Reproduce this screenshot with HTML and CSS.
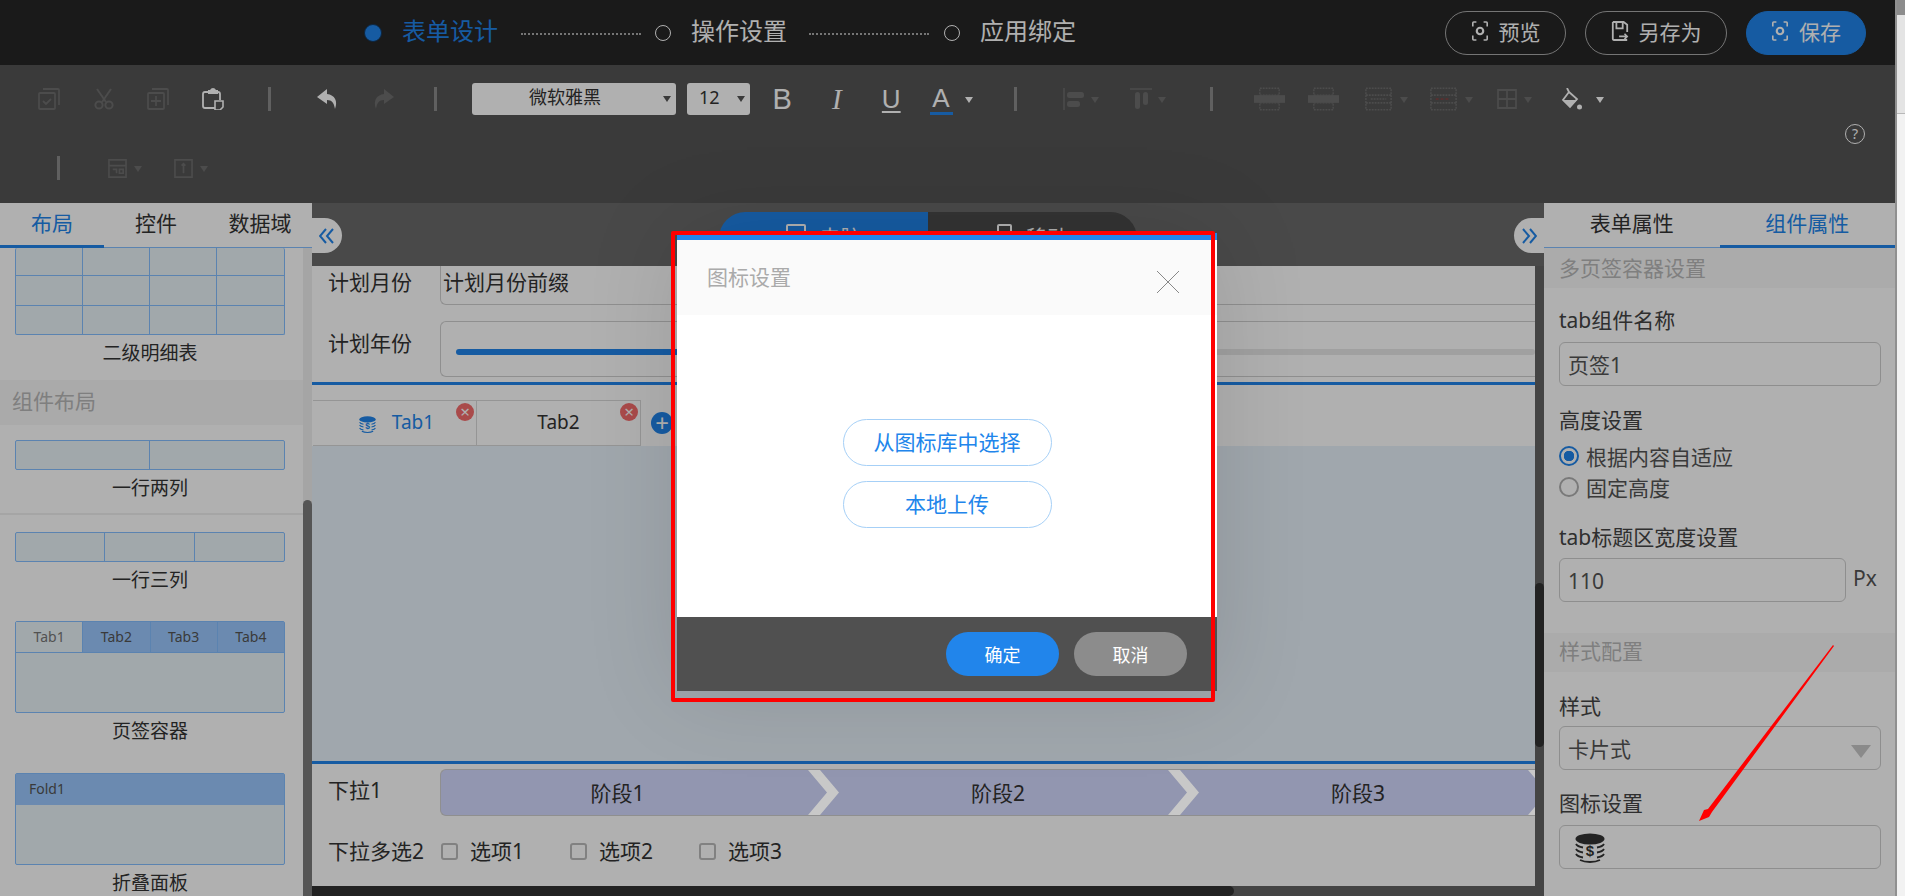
FILE: index.html
```html
<!DOCTYPE html>
<html lang="zh-CN">
<head>
  <meta charset="UTF-8" />
  <title>表单设计</title>
  <link rel="stylesheet" href="styles.css">
</head>
<body>

  <svg class="defs" width="0" height="0">
    <symbol id="scan" viewBox="0 0 20 24">
      <path d="M2 7V3q0-1 1-1h3M14 2h3q1 0 1 1v4M2 17v4q0 1 1 1h3M14 22h3q1 0 1-1v-4" fill="none" stroke="currentColor" stroke-width="1.800"/>
      <circle cx="10" cy="12" r="3.600" fill="none" stroke="currentColor" stroke-width="2.400"/>
    </symbol>
  </svg>

  <div class="page">
    <div class="app">

      <header class="topbar">
        <div class="steps">
          <span class="step-dot"></span>
          <span class="step-name step-name-on">表单设计</span>
          <span class="step-line step-line-a"></span>
          <span class="step-ring"></span>
          <span class="step-name">操作设置</span>
          <span class="step-line step-line-b"></span>
          <span class="step-ring"></span>
          <span class="step-name">应用绑定</span>
        </div>
        <div class="top-actions">
          <button class="top-btn top-btn-preview"><svg class="top-ic"><use href="#scan"/></svg>预览</button>
          <button class="top-btn top-btn-saveas">
            <svg class="top-ic" viewBox="0 0 20 24"><path d="M2 2h12l4 3v8M18 22H3q-1 0-1-1V2M6 2v7h7V2" fill="none" stroke="currentColor" stroke-width="2"/><path d="M9 18h9M15 15l3 3-3 3" fill="none" stroke="currentColor" stroke-width="1.800"/></svg>
            另存为
          </button>
          <button class="top-btn top-btn-save"><svg class="top-ic"><use href="#scan"/></svg>保存</button>
        </div>
      </header>

      <section class="toolbar">
        <div class="tb-row">
          <span class="tool"><svg class="ic off" viewBox="0 0 22 22"><path d="M5 1h15q1 0 1 1v15M2 5h14q1 0 1 1v14q0 1-1 1H2q-1 0-1-1V6q0-1 1-1zM5 13l3 3 5-5" fill="none" stroke="currentColor" stroke-width="1.800"/></svg></span>
          <span class="tool"><svg class="ic off" viewBox="0 0 22 22"><path d="M4 1l9 13M18 1L9 14" fill="none" stroke="currentColor" stroke-width="2"/><circle cx="6" cy="17" r="3.600" fill="none" stroke="currentColor" stroke-width="2"/><circle cx="16" cy="17" r="3.600" fill="none" stroke="currentColor" stroke-width="2"/></svg></span>
          <span class="tool"><svg class="ic off" viewBox="0 0 22 22"><path d="M5 1h15q1 0 1 1v15M2 5h14q1 0 1 1v14q0 1-1 1H2q-1 0-1-1V6q0-1 1-1zM9 8v10M4 13h10" fill="none" stroke="currentColor" stroke-width="1.800"/></svg></span>
          <span class="tool"><svg class="ic" viewBox="0 0 22 22"><path d="M14 20H3q-2 0-2-2V6q0-2 2-2h13q2 0 2 2v6" fill="none" stroke="currentColor" stroke-width="1.800"/><path d="M6 2h2q1-2 3-2t3 2h2v4H6z" fill="currentColor"/><path d="M13 13h8v6l-3 3h-5z" fill="#545454" stroke="currentColor" stroke-width="1.600"/></svg></span>
          <span class="sep sep-history"></span>
          <span class="tool tool-after-sep"><svg class="ic" viewBox="0 0 22 22"><path d="M10 1L0 9l10 7v-4c5 0 7 3 8 9 3-8 0-14-8-15z" fill="currentColor"/></svg></span>
          <span class="tool"><svg class="ic off" viewBox="0 0 22 22"><path d="M12 1l10 8-10 7v-4C7 12 5 15 4 21 1 13 4 7 12 6z" fill="currentColor"/></svg></span>
          <span class="sep sep-font"></span>
          <span class="pick pick-font">微软雅黑<i class="pick-caret"></i></span>
          <span class="pick pick-size">12<i class="pick-caret"></i></span>
          <span class="tool tool-glyph tool-bold">B</span>
          <span class="tool tool-glyph tool-italic">I</span>
          <span class="tool tool-glyph tool-under">U</span>
          <span class="tool tool-color"><span class="color-a">A</span><i class="caret"></i></span>
          <span class="sep sep-align"></span>
          <span class="tool tool-align"><svg class="ic off" viewBox="0 0 22 22"><path d="M1 0v22" stroke="currentColor" stroke-width="1.500"/><rect x="4" y="4" width="17" height="6" rx="2.500" fill="currentColor"/><rect x="4" y="13" width="13" height="6" rx="2.500" fill="currentColor"/></svg><i class="caret caret-off"></i></span>
          <span class="tool tool-valign"><svg class="ic off" viewBox="0 0 22 22"><path d="M0 1h22" stroke="currentColor" stroke-width="1.500"/><rect x="5" y="4" width="5" height="17" rx="2.500" fill="currentColor"/><rect x="13" y="4" width="5" height="13" rx="2.500" fill="currentColor"/></svg><i class="caret caret-off"></i></span>
          <span class="sep"></span>
          <span class="tool tool-merge"><svg class="ic ic-wide off" viewBox="0 0 32 24"><path d="M6 1h20v22H6zM6 8h20M6 16h20" fill="none" stroke="currentColor" stroke-width="1.500" stroke-dasharray="2 1"/><rect x="0" y="8" width="32" height="8" fill="currentColor"/></svg></span>
          <span class="tool tool-merge2"><svg class="ic ic-wide off" viewBox="0 0 32 24"><path d="M6 1h20v22H6zM6 8h20M6 16h20" fill="none" stroke="currentColor" stroke-width="1.500" stroke-dasharray="2 1"/><rect x="0" y="8" width="32" height="8" fill="currentColor"/></svg></span>
          <span class="tool tool-cells"><svg class="ic ic-wide off" viewBox="0 0 32 24"><path d="M3 1h26v7H3zM3 16h26v7H3zM3 8v8M29 8v8M8 12h16" fill="none" stroke="currentColor" stroke-width="1.600" stroke-dasharray="2 1"/></svg><i class="caret caret-off"></i></span>
          <span class="tool tool-cells2"><svg class="ic ic-wide off" viewBox="0 0 32 24"><path d="M3 1h26v7H3zM3 16h26v7H3zM3 8v8M29 8v8" fill="none" stroke="currentColor" stroke-width="1.600" stroke-dasharray="2 1"/><path d="M8 12h14" stroke="#7c4646" stroke-width="2" stroke-dasharray="3 2"/></svg><i class="caret caret-off"></i></span>
          <span class="tool tool-grid"><svg class="ic off" viewBox="0 0 22 22"><path d="M2 2h18v18H2zM11 2v18M2 11h18" fill="none" stroke="currentColor" stroke-width="1.800"/></svg><i class="caret caret-off"></i></span>
          <span class="tool tool-fill"><svg class="ic" viewBox="0 0 22 22"><path d="M7 0l2 4-6 8 7 7 7-8-8-7" fill="none" stroke="currentColor" stroke-width="1.800"/><path d="M3 12h14l-7 7z" fill="currentColor"/><circle cx="19.500" cy="19" r="2.500" fill="currentColor"/></svg><i class="caret"></i></span>
        </div>
        <div class="tb-help"><span class="help-mark">?</span></div>
        <div class="tb-row tb-row-two">
          <span class="sep"></span>
          <span class="tool tool-view"><svg class="ic ic-small off" viewBox="0 0 22 20"><path d="M2 1h18v18H2zM2 7h18M6 11h4v4M13 11h4v4h-4z" fill="none" stroke="currentColor" stroke-width="1.800"/></svg><i class="caret caret-off"></i></span>
          <span class="tool tool-view"><svg class="ic ic-small off" viewBox="0 0 22 20"><path d="M2 1h18v18H2zM11 5v10M9 7l2-2 2 2" fill="none" stroke="currentColor" stroke-width="1.800"/></svg><i class="caret caret-off"></i></span>
        </div>
      </section>

      <main class="workspace">

        <aside class="left-panel">
          <nav class="tabs">
            <span class="tab tab-on">布局</span>
            <span class="tab">控件</span>
            <span class="tab">数据域</span>
          </nav>
          <div class="left-body">
            <div class="widget-list">
              <div class="widget widget-table">
                <div class="thumb thumb-four thumb-open">
                  <i class="row-a"></i><i class="row-a"></i><i class="row-a"></i><i class="row-a"></i>
                  <i class="row-b"></i><i class="row-b"></i><i class="row-b"></i><i class="row-b"></i>
                  <i class="row-c"></i><i class="row-c"></i><i class="row-c"></i><i class="row-c"></i>
                </div>
                <p class="widget-name">二级明细表</p>
              </div>
              <h4 class="widget-group">组件布局</h4>
              <div class="widget widget-line">
                <div class="thumb thumb-two"><i></i><i></i></div>
                <p class="widget-name">一行两列</p>
              </div>
              <div class="widget widget-three">
                <div class="thumb thumb-three"><i></i><i></i><i></i></div>
                <p class="widget-name">一行三列</p>
              </div>
              <div class="widget widget-tabs">
                <div class="thumb-tabs">
                  <div class="thumb-head">
                    <span class="thumb-tab thumb-tab-on">Tab1</span>
                    <span class="thumb-tab">Tab2</span>
                    <span class="thumb-tab">Tab3</span>
                    <span class="thumb-tab">Tab4</span>
                  </div>
                </div>
                <p class="widget-name">页签容器</p>
              </div>
              <div class="widget widget-fold">
                <div class="thumb-tabs">
                  <div class="thumb-fold">Fold1</div>
                </div>
                <p class="widget-name">折叠面板</p>
              </div>
            </div>
            <div class="scrollbar"><span class="scroll-thumb"></span></div>
          </div>
        </aside>

        <section class="center">
          <div class="strip">
            <span class="collapse collapse-left"><svg width="16" height="16" viewBox="0 0 16 16"><path d="M7 1L1 8l6 7M14 1L8 8l6 7" fill="none" stroke="currentColor" stroke-width="2"/></svg></span>
            <div class="device-switch">
              <span class="device device-on"><i class="device-ic"></i>电脑</span>
              <span class="device"><i class="device-ic device-ic-small"></i>移动</span>
            </div>
            <span class="collapse collapse-right"><svg width="16" height="16" viewBox="0 0 16 16"><path d="M2 1l6 7-6 7M9 1l6 7-6 7" fill="none" stroke="currentColor" stroke-width="2"/></svg></span>
          </div>
          <div class="canvas-wrap">
            <div class="canvas">
              <div class="form-row form-row-month">
                <label class="form-label">计划月份</label>
                <div class="form-box form-box-cut">计划月份前缀</div>
              </div>
              <div class="form-row form-row-year">
                <label class="form-label">计划年份</label>
                <div class="form-box form-box-slider"><span class="slider"></span></div>
              </div>
              <div class="blue-line blue-line-top"></div>
              <div class="design-tabs">
                <span class="design-tab design-tab-on">
                  <svg class="coin-small" viewBox="0 0 30 30">
                    <ellipse cx="15" cy="6" rx="14.500" ry="5.500" fill="currentColor"/>
                    <path d="M1 11c1 2 4 3 7 3.500M1 16c1 2 4 3 7 3.500M1 21c1 2 4 3 7 3.500M5 27c3 1.500 7 2 10 2s7-.5 10-2M29 11c-1 2-4 3-7 3.500M29 16c-1 2-4 3-7 3.500M29 21c-1 2-4 3-7 3.500" fill="none" stroke="currentColor" stroke-width="1.800"/>
                    <text class="coin-sign" x="15" y="23">$</text>
                  </svg>
                  Tab1<i class="tab-close">×</i>
                </span>
                <span class="design-tab">Tab2<i class="tab-close">×</i></span>
                <span class="tab-add">+</span>
              </div>
              <div class="design-pane"></div>
              <div class="blue-line"></div>
              <div class="form-row form-row-stage">
                <label class="form-label">下拉1</label>
                <div class="stages">
                  <span class="stage stage-first">阶段1<i class="chevron"></i></span>
                  <span class="stage">阶段2<i class="chevron"></i></span>
                  <span class="stage">阶段3<i class="chevron"></i></span>
                </div>
              </div>
              <div class="form-row form-row-check">
                <label class="form-label">下拉多选2</label>
                <span class="check"><i class="check-box"></i>选项1</span>
                <span class="check"><i class="check-box"></i>选项2</span>
                <span class="check"><i class="check-box"></i>选项3</span>
              </div>
              <div class="hbar"><span class="hbar-thumb"></span></div>
            </div>
            <div class="vbar"><span class="vbar-thumb"></span></div>
          </div>
        </section>

        <aside class="right-panel">
          <nav class="tabs">
            <span class="tab">表单属性</span>
            <span class="tab tab-on">组件属性</span>
          </nav>
          <h4 class="prop-group">多页签容器设置</h4>
          <div class="props">
            <p class="prop-label">tab组件名称</p>
            <div class="prop-input prop-gap-name">页签1</div>
            <p class="prop-label prop-label-height">高度设置</p>
            <p class="radio radio-on"><i class="radio-mark"></i>根据内容自适应</p>
            <p class="radio"><i class="radio-mark"></i>固定高度</p>
            <p class="prop-label prop-label-width">tab标题区宽度设置</p>
            <div class="prop-unit">
              <div class="prop-input prop-input-short">110</div>
              <span>Px</span>
            </div>
          </div>
          <h4 class="prop-group prop-group-style">样式配置</h4>
          <div class="props">
            <p class="prop-label prop-label-style">样式</p>
            <div class="prop-input prop-select">卡片式<i class="select-caret"></i></div>
            <p class="prop-label prop-label-icon">图标设置</p>
            <div class="prop-input prop-gap-name">
              <svg class="coin-big" viewBox="0 0 30 30">
                <ellipse cx="15" cy="6" rx="14.500" ry="5.500" fill="currentColor"/>
                <path d="M1 11c1 2 4 3 7 3.500M1 16c1 2 4 3 7 3.500M1 21c1 2 4 3 7 3.500M5 27c3 1.500 7 2 10 2s7-.5 10-2M29 11c-1 2-4 3-7 3.500M29 16c-1 2-4 3-7 3.500M29 21c-1 2-4 3-7 3.500" fill="none" stroke="currentColor" stroke-width="1.800"/>
                <text class="coin-sign" x="15" y="23">$</text>
              </svg>
            </div>
          </div>
        </aside>
      </main>

      <div class="mask"></div>

      <div class="dialog">
        <div class="dialog-head">
          <span>图标设置</span>
          <svg class="dialog-close" viewBox="0 0 22 22"><path d="M0 0l22 22M22 0L0 22" stroke="currentColor" stroke-width="1"/></svg>
        </div>
        <div class="dialog-body">
          <button class="ghost-btn">从图标库中选择</button>
          <button class="ghost-btn">本地上传</button>
        </div>
        <div class="dialog-foot">
          <button class="foot-btn foot-btn-ok">确定</button>
          <button class="foot-btn foot-btn-cancel">取消</button>
        </div>
      </div>

      <div class="red-box"></div>
      <svg class="red-arrow" viewBox="0 0 150 190"><polygon points="143,5 144,6 22,172 19,177 9,181 14,170 18,169" fill="#f00"/></svg>
    </div>

    <div class="page-edge"></div>
  </div>

</body>
</html>
```

FILE: styles.css
```css
* {
  box-sizing: border-box;
  margin: 0;
  padding: 0;
}

html, body {
  height: 100%;
  overflow: hidden;
  font-family: "Noto Sans", "Noto Sans CJK SC", sans-serif;
  color: #333;
}

i {
  font-style: normal;
}

button {
  font-family: inherit;
  cursor: pointer;
}

.defs {
  position: absolute;
}

.page {
  display: flex;
  height: 896px;
}

.app {
  position: relative;
  width: 1895px;
  display: flex;
  flex-direction: column;
}

.page-edge {
  flex: 1;
  background: linear-gradient(#8c8c8c 15px, #e4e4e4 15px, #e4e4e4 113px, #b8b8b8 113px, #b8b8b8 114px, #f2f2f2 114px);
  border-left: 2px solid #909090;
}

/* Top bar */
.topbar {
  height: 65px;
  background: #262626;
  display: flex;
  align-items: center;
  padding-left: 364px;
  padding-right: 29px;
  flex: none;
}

.steps {
  display: flex;
  align-items: center;
}

.step-dot {
  width: 18px;
  height: 18px;
  border-radius: 50%;
  background: #2185eb;
  border: 1px solid #14375c;
  margin-right: 20px;
}

.step-ring {
  width: 16px;
  height: 16px;
  border-radius: 50%;
  border: 1.5px solid #fff;
  margin-right: 20px;
}

.step-name {
  font-size: 24px;
  line-height: 34px;
  padding-bottom: 3px;
  color: #fff;
}

.step-name-on {
  color: #2185eb;
}

.step-line {
  width: 120px;
  border-top: 2px dotted #aaa;
}

.step-line-a {
  margin: 2px 14px 0 23px;
}

.step-line-b {
  margin: 2px 15px 0 22px;
}

.top-actions {
  margin-left: auto;
  display: flex;
  gap: 19px;
}

.top-btn {
  height: 44px;
  border-radius: 22px;
  border: 1px solid #aaa;
  background: transparent;
  color: #fff;
  font-size: 21px;
  display: flex;
  align-items: center;
  justify-content: center;
  gap: 10px;
  padding-bottom: 3px;
}

.top-btn-preview {
  width: 121px;
}

.top-btn-saveas {
  width: 142px;
}

.top-btn-save {
  width: 120px;
  background: #2185eb;
  border-color: #2185eb;
}

.top-ic {
  width: 18px;
  height: 22px;
}

/* Toolbar */
.toolbar {
  height: 138px;
  background: #545454;
  flex: none;
  color: #fff;
}

.tb-row {
  display: flex;
  align-items: center;
  height: 32px;
  margin-top: 18px;
  padding-left: 22px;
}

.tb-row-two {
  height: 24px;
  margin-top: 12px;
  padding-left: 57px;
}

.tb-help {
  display: flex;
  justify-content: flex-end;
  padding-right: 30px;
  margin-top: 9px;
  height: 20px;
}

.help-mark {
  width: 20px;
  height: 20px;
  border: 1.5px solid #fff;
  border-radius: 50%;
  font-size: 14px;
  line-height: 17px;
  text-align: center;
}

.tool {
  width: 54.5px;
  display: flex;
  align-items: center;
  justify-content: center;
  flex: none;
}

.ic {
  width: 22px;
  height: 22px;
  color: #fff;
}

.ic.off {
  color: #6e6e6e;
}

.ic-wide {
  width: 31px;
  height: 24px;
}

.ic-small {
  width: 21px;
  height: 19px;
}

.sep {
  width: 3px;
  height: 24px;
  background: #8c8c8c;
  flex: none;
}

.sep-history {
  margin-left: 28px;
}

.tool-after-sep {
  margin-left: 30px;
}

.sep-font {
  margin-left: 24px;
}

.pick {
  position: relative;
  height: 32px;
  background: #fff;
  border-radius: 3px;
  color: #333;
  font-size: 18px;
  line-height: 29px;
  flex: none;
}

.pick-font {
  width: 204px;
  margin-left: 35px;
  padding-left: 57px;
}

.pick-size {
  width: 63px;
  margin-left: 11px;
  padding-left: 12px;
}

.pick-caret {
  position: absolute;
  right: 5px;
  top: 13px;
  border: 4px solid transparent;
  border-top: 6px solid #555;
}

.caret {
  border: 4px solid transparent;
  border-top: 6px solid #fff;
  margin-top: 6px;
}

.caret-off {
  border-top-color: #6e6e6e;
  margin-left: 6px;
}

.tool-glyph {
  font-family: "Liberation Sans", sans-serif;
  font-size: 29px;
  line-height: 32px;
}

.tool-bold {
  margin-left: 5px;
}

.tool-italic {
  font-family: "Liberation Serif", serif;
  font-style: italic;
}

.tool-under {
  font-size: 26px;
  text-decoration: underline;
  text-decoration-thickness: 2px;
  text-underline-offset: 3px;
}

.tool-color {
  width: 54px;
  justify-content: flex-start;
  padding-left: 11px;
  gap: 12px;
}

.color-a {
  font-family: "Liberation Sans", sans-serif;
  font-size: 26px;
  line-height: 28px;
  width: 24px;
  text-align: center;
  border-bottom: 3px solid #2185eb;
}

.sep-align {
  margin-left: 41px;
}

.tool-align {
  margin-left: 46px;
  width: 67px;
  justify-content: flex-start;
}

.tool-valign {
  width: 80px;
  justify-content: flex-start;
}

.tool-merge {
  margin-left: 41px;
  width: 54px;
  justify-content: flex-start;
}

.tool-merge2 {
  width: 55px;
  justify-content: flex-start;
}

.tool-cells {
  width: 65px;
  justify-content: flex-start;
}

.tool-cells2 {
  width: 68px;
  justify-content: flex-start;
}

.tool-grid {
  width: 64px;
  justify-content: flex-start;
}

.tool-fill {
  width: 60px;
  justify-content: flex-start;
}

.tool-fill .caret {
  margin-left: 14px;
}

.tool-view {
  width: 66px;
  justify-content: flex-start;
}

.tb-row-two .tool-view:nth-child(2) {
  margin-left: 47px;
}

/* Workspace */
.workspace {
  flex: 1;
  min-height: 0;
  display: flex;
}

.left-panel {
  width: 312px;
  background: #fff;
  display: flex;
  flex-direction: column;
  flex: none;
}

.tabs {
  display: flex;
  height: 45px;
  flex: none;
  border-bottom: 1px solid #84beff;
}

.tab {
  flex: 1;
  text-align: center;
  font-size: 21px;
  line-height: 41px;
}

.tab-on {
  color: #2185eb;
  border-bottom: 3px solid #2185eb;
  height: 45px;
}

.left-body {
  flex: 1;
  min-height: 0;
  display: flex;
}

.widget-list {
  flex: 1;
  overflow: hidden;
}

.scrollbar {
  width: 9px;
  background: #f0f0f0;
}

.scroll-thumb {
  display: block;
  margin-top: 252px;
  height: 400px;
  background: #7c7c7c;
  border-radius: 5px 5px 0 0;
}

.widget {
  padding: 0 18px 0 15px;
}

.widget-name {
  font-size: 19px;
  line-height: 36px;
  text-align: center;
  color: #333;
}

.widget-table {
  height: 132px;
}

.widget-line {
  height: 90px;
  padding-top: 15px;
  border-bottom: 2px solid #f0f0f0;
}

.widget-three {
  height: 106px;
  padding-top: 17px;
}

.widget-tabs {
  height: 152px;
}

.widget-fold {
  height: 150px;
}

.widget-group {
  height: 45px;
  background: #f6f6f6;
  font-size: 21px;
  font-weight: 400;
  line-height: 43px;
  padding-left: 12px;
  color: #b8b8b8;
}

.thumb {
  display: grid;
  background: #e9f3f8;
  border: 1px solid #84beff;
  border-radius: 2px;
  height: 30px;
}

.thumb i {
  border-right: 1px solid #84beff;
}

.thumb i:last-child,
.thumb i:nth-child(4n) {
  border-right: none;
}

.thumb-four {
  grid-template-columns: repeat(4, 1fr);
  grid-template-rows: 28px 30px 1fr;
  height: 87px;
}

.thumb-open {
  border-top: none;
}

.thumb .row-a,
.thumb .row-b {
  border-bottom: 1px solid #84beff;
}

.thumb-two {
  grid-template-columns: 1fr 1fr;
}

.thumb-three {
  grid-template-columns: 89px 90px 1fr;
}

.thumb-tabs {
  height: 92px;
  background: #e9f3f8;
  border: 1px solid #84beff;
  border-radius: 2px;
}

.thumb-head {
  display: flex;
  height: 31px;
  border-bottom: 1px solid #84beff;
}

.thumb-tab {
  flex: 1;
  background: #9bc9ff;
  border-right: 1px solid #84beff;
  font-size: 14px;
  line-height: 30px;
  text-align: center;
  color: #555;
}

.thumb-tab:last-child {
  border-right: none;
}

.thumb-tab-on {
  background: #e9f3f8;
  color: #777;
}

.thumb-fold {
  height: 31px;
  background: #9bc9ff;
  font-size: 14px;
  line-height: 30px;
  padding-left: 13px;
  color: #555;
}

/* Center canvas */
.center {
  width: 1232px;
  flex: none;
  display: flex;
  flex-direction: column;
}

.strip {
  height: 63px;
  flex: none;
  background: #6b6b6b;
  display: flex;
  justify-content: space-between;
  align-items: flex-start;
}

.collapse {
  width: 30px;
  height: 35px;
  margin-top: 15px;
  background: #fff;
  color: #2185eb;
  display: flex;
  align-items: center;
  justify-content: center;
}

.collapse-left {
  border-radius: 0 18px 18px 0;
}

.collapse-right {
  border-radius: 18px 0 0 18px;
}

.device-switch {
  display: flex;
  width: 418px;
  height: 53px;
  margin-top: 9px;
}

.device {
  flex: 1;
  display: flex;
  justify-content: center;
  gap: 14px;
  padding-top: 10px;
  font-size: 21px;
  line-height: 30px;
  color: #fff;
  background: #4a4a4a;
  border-radius: 0 27px 27px 0;
}

.device-on {
  background: #2185eb;
  border-radius: 27px 0 0 27px;
}

.device-ic {
  width: 20px;
  height: 24px;
  margin-top: 2px;
  border: 2px solid #fff;
  border-radius: 2px;
}

.device-ic-small {
  width: 15px;
}

.canvas-wrap {
  flex: 1;
  min-height: 0;
  display: flex;
}

.canvas {
  flex: 1;
  background: #fff;
  display: flex;
  flex-direction: column;
}

.vbar {
  width: 9px;
  background: #636363;
}

.vbar-thumb {
  display: block;
  margin-top: 317px;
  height: 164px;
  background: #323232;
  border-radius: 5px;
}

.form-row {
  display: flex;
  align-items: flex-start;
  flex: none;
  padding-left: 16px;
}

.form-label {
  width: 112px;
  font-size: 21px;
  flex: none;
}

.form-row-month {
  height: 55px;
}

.form-row-month .form-label {
  line-height: 33px;
}

.form-row-year {
  height: 56px;
}

.form-row-year .form-label {
  line-height: 44px;
}

.form-box {
  flex: 1;
  border: 1px solid #d0d0d0;
  border-radius: 6px;
}

.form-box-cut {
  height: 39px;
  border-top: none;
  border-radius: 0 0 0 6px;
  border-right: none;
  font-size: 21px;
  line-height: 33px;
  padding-left: 2px;
}

.form-box-slider {
  height: 56px;
  border-right: none;
  border-radius: 6px 0 0 6px;
  padding: 27px 0 0 15px;
}

.slider {
  display: block;
  height: 6px;
  border-radius: 3px;
  background: linear-gradient(90deg, #2185eb 30%, #e8e8e8 30%);
}

.blue-line {
  height: 3px;
  background: #2185eb;
  flex: none;
}

.blue-line-top {
  margin-top: 5px;
}

.design-tabs {
  display: flex;
  align-items: center;
  margin-top: 15px;
  height: 46px;
  padding-left: 1px;
  flex: none;
}

.design-tab {
  position: relative;
  width: 164px;
  height: 46px;
  border: 1px solid #d8d8d8;
  border-left: none;
  font-size: 19px;
  line-height: 42px;
  display: flex;
  justify-content: center;
  gap: 16px;
}

.design-tab-on {
  color: #2185eb;
  padding-left: 20px;
}

.coin-small {
  width: 17px;
  height: 17px;
  margin-top: 15px;
}

.coin-sign {
  text-anchor: middle;
  font-family: "Liberation Sans", sans-serif;
  font-size: 15px;
  font-weight: 700;
  fill: currentColor;
}

.tab-close {
  position: absolute;
  right: 2px;
  top: 2px;
  width: 18px;
  height: 18px;
  border-radius: 50%;
  background: #f56c6c;
  color: #fff;
  font-size: 17px;
  line-height: 17px;
  text-align: center;
}

.tab-add {
  width: 22px;
  height: 22px;
  margin-left: 10px;
  border-radius: 50%;
  background: #2185eb;
  color: #fff;
  font-size: 24px;
  line-height: 21px;
  text-align: center;
}

.design-pane {
  height: 315px;
  background: #e8f2fb;
  flex: none;
}

.form-row-stage {
  margin-top: 5px;
  height: 47px;
}

.form-row-stage .form-label {
  line-height: 42px;
}

.stages {
  flex: 1;
  display: flex;
  height: 47px;
  overflow: hidden;
  border: 1px solid #d0d0d0;
  border-right: none;
  border-radius: 6px 0 0 6px;
  background: #d4d9ff;
}

.stage {
  position: relative;
  width: 360px;
  flex: none;
  display: flex;
  align-items: center;
  justify-content: center;
  font-size: 21px;
  padding-left: 20px;
  padding-bottom: 2px;
}

.stage-first {
  width: 367px;
  padding-left: 0;
  padding-right: 14px;
}

.chevron {
  position: absolute;
  z-index: 101;
  left: 100%;
  top: 0;
  width: 31px;
  height: 100%;
  background: #c8c8c8;
  clip-path: polygon(0 0, 12px 0, 100% 50%, 12px 100%, 0 100%, 19px 50%);
}

.form-row-check {
  margin-top: 14px;
  height: 40px;
  align-items: center;
}

.form-label + .check {
  margin-left: 1px;
}

.check {
  width: 129px;
  display: flex;
  align-items: center;
  gap: 12px;
  font-size: 21px;
}

.check-box {
  width: 17px;
  height: 17px;
  border: 2px solid #bbb;
  border-radius: 3px;
  background: #fff;
  margin-top: 2px;
}

.hbar {
  margin-top: auto;
  height: 10px;
  background: #636363;
  flex: none;
}

.hbar-thumb {
  display: block;
  width: 922px;
  height: 10px;
  background: #323232;
  border-radius: 0 5px 5px 0;
}

/* Right panel */
.right-panel {
  flex: 1;
  background: #fff;
  display: flex;
  flex-direction: column;
}

.prop-group {
  height: 40px;
  flex: none;
  background: #f8f8f8;
  font-size: 21px;
  font-weight: 400;
  line-height: 40px;
  padding-left: 15px;
  color: #b8b8b8;
}

.prop-group-style {
  margin-top: 31px;
  height: 39px;
  line-height: 37px;
}

.props {
  padding: 0 14px 0 15px;
}

.prop-label {
  font-size: 21px;
  line-height: 27px;
  padding-bottom: 3px;
  margin-top: 19px;
  color: #444;
}

.prop-label-height {
  margin-top: 21px;
}

.prop-label-width {
  margin-top: 22px;
}

.prop-label-style {
  margin-top: 21px;
}

.prop-label-icon {
  margin-top: 20px;
}

.prop-input {
  height: 44px;
  border: 1px solid #cecece;
  border-radius: 6px;
  font-size: 21px;
  line-height: 44px;
  padding-left: 8px;
  margin-top: 4px;
  color: #555;
  position: relative;
}

.prop-gap-name {
  margin-top: 5px;
}

.radio {
  display: flex;
  align-items: center;
  gap: 7px;
  height: 31px;
  font-size: 21px;
  color: #555;
}

.radio-on {
  margin-top: 3px;
}

.radio-mark {
  width: 20px;
  height: 20px;
  border-radius: 50%;
  border: 2px solid #b0b0b0;
}

.radio-on .radio-mark {
  border-color: #2185eb;
  background: radial-gradient(#2185eb 5px, transparent 5.500px);
}

.prop-unit {
  display: flex;
  align-items: center;
  gap: 7px;
  font-size: 21px;
  color: #555;
}

.prop-input-short {
  width: 287px;
}

.prop-select {
  margin-top: 3px;
}

.select-caret {
  position: absolute;
  right: 9px;
  top: 18px;
  border: 10px solid transparent;
  border-top: 13px solid #c8c8c8;
  border-bottom: none;
}

.coin-big {
  width: 30px;
  height: 30px;
  margin: 7px 0 0 7px;
  color: #333;
  display: block;
}

/* Modal */
.mask {
  position: absolute;
  inset: 0;
  z-index: 100;
  background: rgba(0, 0, 0, 0.31);
}

.dialog {
  position: absolute;
  z-index: 110;
  left: 677px;
  top: 233px;
  width: 540px;
  height: 458px;
  background: #fff;
  border-top: 7px solid #2185eb;
  display: flex;
  flex-direction: column;
  box-shadow: 0 0 90px rgba(0, 0, 0, 0.12);
}

.dialog-head {
  height: 75px;
  background: #fafafa;
  padding: 18px 38px 0 30px;
  display: flex;
  justify-content: space-between;
  font-size: 21px;
  line-height: 38px;
  color: #aaa;
  flex: none;
}

.dialog-close {
  width: 22px;
  height: 22px;
  margin-top: 13px;
  color: #888;
}

.dialog-body {
  flex: 1;
  display: flex;
  flex-direction: column;
  align-items: center;
  padding-top: 104px;
  gap: 15px;
}

.ghost-btn {
  width: 209px;
  height: 47px;
  border: 1px solid #a6d0f7;
  border-radius: 24px;
  background: #fff;
  color: #2185eb;
  font-size: 21px;
  padding-bottom: 3px;
}

.dialog-foot {
  height: 74px;
  background: #505050;
  display: flex;
  justify-content: flex-end;
  gap: 15px;
  padding: 15px 30px 0 0;
  flex: none;
}

.foot-btn {
  width: 113px;
  height: 44px;
  border: none;
  border-radius: 22px;
  color: #fff;
  font-size: 18px;
  background: #2185eb;
}

.foot-btn-cancel {
  background: #8c8c8c;
}

/* Annotations drawn on the screenshot */
.red-box {
  position: absolute;
  z-index: 120;
  left: 671px;
  top: 231px;
  width: 544px;
  height: 471px;
  border: 4px solid #f00;
  border-radius: 2px;
}

.red-arrow {
  position: absolute;
  z-index: 120;
  left: 1690px;
  top: 640px;
  width: 150px;
  height: 190px;
}
```
